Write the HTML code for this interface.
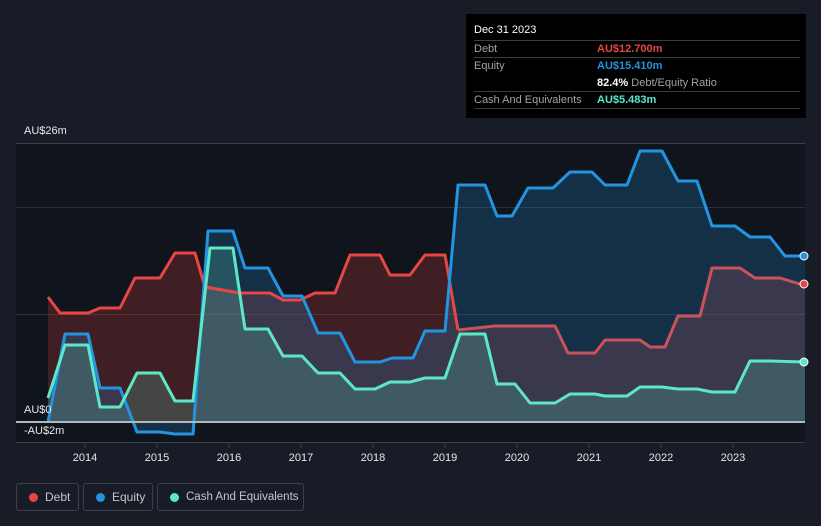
<!DOCTYPE html>
<html><head><meta charset="utf-8"><style>
*{margin:0;padding:0;box-sizing:border-box}
body{width:821px;height:526px;background:#171c26;font-family:"Liberation Sans",sans-serif;position:relative;overflow:hidden;color:#fff}
.tt{position:absolute;left:466px;top:14px;width:340px;height:104px;background:#000;font-size:11px}
.tt .r{position:absolute;left:8px;width:326px;border-bottom:1px solid #3a3d44;height:17px}
.tt span{position:absolute;top:2px}
.lg{position:absolute;top:483px;height:28px;border:1px solid #3b404b;border-radius:3px;font-size:12px;color:#c4c7cc;line-height:26px;white-space:nowrap}
.lg i{position:absolute;left:12px;top:9px;width:9px;height:9px;border-radius:50%}
.ax{position:absolute;font-size:11px;color:#e6e7ea}
</style></head><body>
<div class="tt">
<div class="r" style="top:8px;height:19px"><span style="color:#fff">Dec 31 2023</span></div>
<div class="r" style="top:27px"><span style="color:#a0a3a8">Debt</span><span style="left:123px;color:#e84545;font-weight:bold">AU$12.700m</span></div>
<div class="r" style="top:44px;border:none"><span style="color:#a0a3a8">Equity</span><span style="left:123px;color:#2394df;font-weight:bold">AU$15.410m</span></div>
<div class="r" style="top:61px"><span style="left:123px;color:#fff"><b>82.4%</b> <span style="position:static;color:#a0a3a8">Debt/Equity Ratio</span></span></div>
<div class="r" style="top:78px"><span style="color:#a0a3a8">Cash And Equivalents</span><span style="left:123px;color:#5ee6c9;font-weight:bold">AU$5.483m</span></div>
</div>
<svg width="821" height="526" style="position:absolute;left:0;top:0">
<rect x="16" y="143" width="789" height="300" fill="#10141c"/>
<g stroke="#2a2f39" stroke-width="1"><line x1="16" y1="143.5" x2="805" y2="143.5" stroke="#3a3f49"/><line x1="16" y1="207.5" x2="805" y2="207.5"/><line x1="16" y1="314.5" x2="805" y2="314.5"/><line x1="16" y1="442.5" x2="805" y2="442.5" stroke="#3a3f49"/></g>
<polygon fill="#e84545" fill-opacity="0.22" points="48,297 60,313 88,313 100,308 120,308 135,278 160,278 175,253 195,253 205,287 240,293 270,293 283,300 300,300 315,293 335,293 350,255 380,255 390,275 410,275 425,255 445,255 458,330 495,326 555,326 568,353 595,353 605,340 640,340 650,347 665,347 678,316 700,316 712,268 740,268 755,278 780,278 800,284 805,284 805,422 48,422"/>
<polygon fill="#2394df" fill-opacity="0.22" points="48,422 65,334 88,334 100,388 120,388 137,432 160,432 175,434 193,434 208,231 233,231 245,268 268,268 283,296 302,296 318,333 340,333 355,362 380,362 392,358 413,358 425,331 445,331 458,185 485,185 497,216 512,216 528,188 553,188 570,172 592,172 605,185 627,185 640,151 662,151 678,181 697,181 712,226 735,226 750,237 770,237 785,256 805,256 805,422"/>
<polygon fill="#5ee6c9" fill-opacity="0.2" points="48,398 65,345 88,345 100,407 120,407 137,373 160,373 175,401 193,401 210,248 233,248 245,329 268,329 283,356 302,356 318,373 340,373 355,389 375,389 390,382 410,382 425,378 445,378 460,334 485,334 497,384 515,384 530,403 555,403 570,394 595,394 605,396 627,396 640,387 662,387 678,389 697,389 712,392 735,392 750,361 770,361 805,362 805,422 48,422"/>
<g fill="none" stroke-width="3" stroke-linejoin="round">
<polyline stroke="#e84545" points="48,297 60,313 88,313 100,308 120,308 135,278 160,278 175,253 195,253 205,287 240,293 270,293 283,300 300,300 315,293 335,293 350,255 380,255 390,275 410,275 425,255 445,255 458,330"/>
<polyline stroke="#c9525c" points="458,330 495,326 555,326 568,353 595,353 605,340 640,340 650,347 665,347 678,316 700,316 712,268 740,268 755,278 780,278 800,284 805,284"/>
<polyline stroke="#2394df" points="48,422 65,334 88,334 100,388 120,388 137,432 160,432 175,434 193,434 208,231 233,231 245,268 268,268 283,296 302,296 318,333 340,333 355,362 380,362 392,358 413,358 425,331 445,331 458,185 485,185 497,216 512,216 528,188 553,188 570,172 592,172 605,185 627,185 640,151 662,151 678,181 697,181 712,226 735,226 750,237 770,237 785,256 805,256"/>
<polyline stroke="#5ee6c9" points="48,398 65,345 88,345 100,407 120,407 137,373 160,373 175,401 193,401 210,248 233,248 245,329 268,329 283,356 302,356 318,373 340,373 355,389 375,389 390,382 410,382 425,378 445,378 460,334 485,334 497,384 515,384 530,403 555,403 570,394 595,394 605,396 627,396 640,387 662,387 678,389 697,389 712,392 735,392 750,361 770,361 805,362"/>
</g>
<line x1="16" y1="422" x2="805" y2="422" stroke="#b5b7bb" stroke-width="2"/>
<circle cx="804" cy="256" r="4" fill="#2394df" stroke="#fff" stroke-width="1"/>
<circle cx="804" cy="284" r="4" fill="#e84545" stroke="#fff" stroke-width="1"/>
<circle cx="804" cy="362" r="4" fill="#5ee6c9" stroke="#fff" stroke-width="1"/>
<g stroke="#3a3f49"><line x1="85" y1="443" x2="85" y2="448"/><line x1="157" y1="443" x2="157" y2="448"/><line x1="229" y1="443" x2="229" y2="448"/><line x1="301" y1="443" x2="301" y2="448"/><line x1="373" y1="443" x2="373" y2="448"/><line x1="445" y1="443" x2="445" y2="448"/><line x1="517" y1="443" x2="517" y2="448"/><line x1="589" y1="443" x2="589" y2="448"/><line x1="661" y1="443" x2="661" y2="448"/><line x1="733" y1="443" x2="733" y2="448"/></g>
<g fill="#e6e7ea" font-size="11" font-family="Liberation Sans" text-anchor="middle"><text x="85" y="461">2014</text><text x="157" y="461">2015</text><text x="229" y="461">2016</text><text x="301" y="461">2017</text><text x="373" y="461">2018</text><text x="445" y="461">2019</text><text x="517" y="461">2020</text><text x="589" y="461">2021</text><text x="661" y="461">2022</text><text x="733" y="461">2023</text></g>
</svg>
<div class="ax" style="left:24px;top:125px">AU$26m</div>
<div class="ax" style="left:24px;top:404px">AU$0</div>
<div class="ax" style="left:24px;top:425px">-AU$2m</div>
<div class="lg" style="left:16px;width:63px;padding-left:28px;"><i style="background:#e84545;"></i>Debt</div>
<div class="lg" style="left:83px;width:70px;padding-left:28px;"><i style="background:#2394df"></i>Equity</div>
<div class="lg" style="left:157px;width:147px;padding-left:28px;font-size:11.5px"><i style="background:#5ee6c9"></i>Cash And Equivalents</div>
</body></html>
